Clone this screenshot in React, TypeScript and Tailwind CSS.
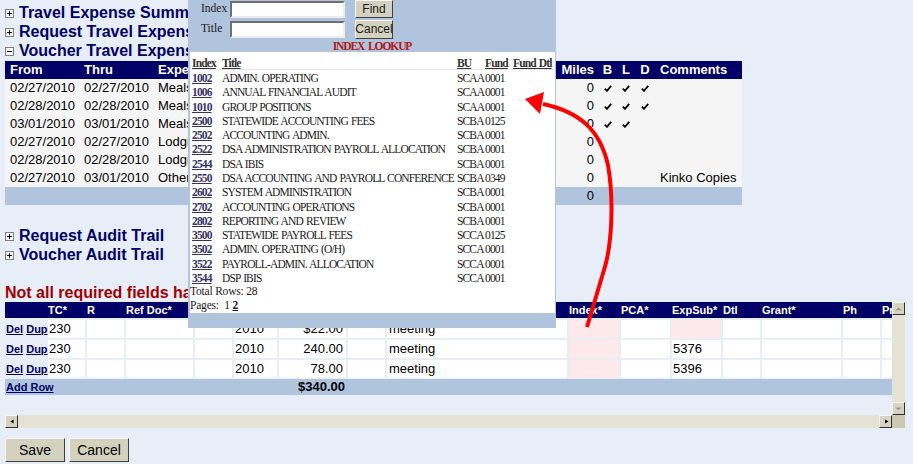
import React from "react";

type VRow = { from: string; thru: string; type: string; b?: boolean; l?: boolean; d?: boolean; note?: string };

const voucherRows: VRow[] = [
  { from: "02/27/2010", thru: "02/27/2010", type: "Meals", b: true, l: true, d: true },
  { from: "02/28/2010", thru: "02/28/2010", type: "Meals", b: true, l: true, d: true },
  { from: "03/01/2010", thru: "03/01/2010", type: "Meals", b: true, l: true },
  { from: "02/27/2010", thru: "02/27/2010", type: "Lodging" },
  { from: "02/28/2010", thru: "02/28/2010", type: "Lodging" },
  { from: "02/27/2010", thru: "03/01/2010", type: "Other", note: "Kinko Copies" },
];

const indexRows: [string, string, string, string][] = [
  ["1002", "ADMIN. OPERATING", "SCAA", "0001"],
  ["1006", "ANNUAL FINANCIAL AUDIT", "SCAA", "0001"],
  ["1010", "GROUP POSITIONS", "SCAA", "0001"],
  ["2500", "STATEWIDE ACCOUNTING FEES", "SCBA", "0125"],
  ["2502", "ACCOUNTING ADMIN.", "SCBA", "0001"],
  ["2522", "DSA ADMINISTRATION PAYROLL ALLOCATION", "SCBA", "0001"],
  ["2544", "DSA IBIS", "SCBA", "0001"],
  ["2550", "DSA ACCOUNTING AND PAYROLL CONFERENCE", "SCBA", "0349"],
  ["2602", "SYSTEM ADMINISTRATION", "SCBA", "0001"],
  ["2702", "ACCOUNTING OPERATIONS", "SCBA", "0001"],
  ["2802", "REPORTING AND REVIEW", "SCBA", "0001"],
  ["3500", "STATEWIDE PAYROLL FEES", "SCCA", "0125"],
  ["3502", "ADMIN. OPERATING (O/H)", "SCCA", "0001"],
  ["3522", "PAYROLL-ADMIN. ALLOCATION", "SCCA", "0001"],
  ["3544", "DSP IBIS", "SCCA", "0001"],
];

// widths of the grid columns in the lines table (2px spacing between)
const cols = [
  "w-[41px]", "w-[37px]", "w-[37px]", "w-[67px]", "w-[37px]", "w-[43px]", "w-[67px]", "w-[37px]",
  "w-[180px]", "w-[50px]", "w-[49px]", "w-[49px]", "w-[37px]", "w-[79px]", "w-[37px]", "w-[60px]",
];
const heads = ["", "TC*", "R", "Ref Doc*", "Line", "FY*", "Amount*", "Qty", "Description*", "Index*", "PCA*", "ExpSub*", "Dtl", "Grant*", "Ph", "Proj*"];

const lines = [
  { amt: "$22.00", exp: "" },
  { amt: "240.00", exp: "5376" },
  { amt: "78.00", exp: "5396" },
];

function Toggle({ label, open = false }: { label: string; open?: boolean }) {
  return (
    <div className="flex h-[19px] items-center whitespace-nowrap text-[16px] font-bold leading-[19px] text-[#000066]">
      <svg width="9" height="9" viewBox="0 0 9 9" className="mt-[2px] shrink-0">
        <rect x="0.5" y="0.5" width="8" height="8" fill="#fff" stroke="#808080" />
        <path d="M2 4.5h5" stroke="#000" />
        {!open && <path d="M4.5 2v5" stroke="#000" />}
      </svg>
      <span className="ml-[5px]">{label}</span>
    </div>
  );
}

function Check() {
  return (
    <svg width="8" height="7" viewBox="0 0 8 7" className="mx-auto mt-[6px]">
      <path d="M0.8 3.6 L3 5.8 L7.2 0.8" stroke="#000" strokeWidth="1.8" fill="none" />
    </svg>
  );
}

function SbButton({ dir, dim = false }: { dir: "up" | "down" | "left" | "right"; dim?: boolean }) {
  const pts = { up: "2,6 6.5,2 11,6", down: "2,2 6.5,6 11,2", left: "6,2 2,4.5 6,7", right: "3,2 7,4.5 3,7" }[dir];
  const vb = dir === "up" || dir === "down" ? "0 -2 13 11" : "-2 0 11 9";
  return (
    <div className="flex h-[13px] w-[13px] shrink-0 items-center justify-center border border-b-[#303030] border-l-[#f4f4ee] border-r-[#303030] border-t-[#f4f4ee] bg-[#d6d3c2]">
      <svg width="9" height="9" viewBox={vb}>
        <polygon points={pts} fill={dim ? "#9a988a" : "#000"} />
      </svg>
    </div>
  );
}

export default function App() {
  return (
    <div className="relative h-[464px] w-[913px] overflow-hidden bg-[#e7eef8] font-['Liberation_Sans',Arial,sans-serif] text-[13px] text-black">
      <div className="pl-[5px] pt-[3px]">
        <Toggle label="Travel Expense Summary" />
        <Toggle label="Request Travel Expenses" />
        <Toggle label="Voucher Travel Expenses" open />

        {/* voucher lines */}
        <div className="mt-[1px] w-[737px] leading-[18px]">
          <div className="flex h-[18px] bg-[#000066] font-bold text-white">
            <div className="w-[74px] pl-[5px]">From</div>
            <div className="w-[74px] pl-[5px]">Thru</div>
            <div className="w-[402px] pl-[5px]">Expense Type</div>
            <div className="w-[43px] pr-[4px] text-right">Miles</div>
            <div className="w-[19px] text-center">B</div>
            <div className="w-[18px] text-center">L</div>
            <div className="w-[20px] text-center">D</div>
            <div className="flex-1 pl-[5px]">Comments</div>
          </div>
          {voucherRows.map((r, i) => (
            <div key={i} className="flex h-[18px] bg-[#f5f5f5]">
              <div className="w-[74px] pl-[5px]">{r.from}</div>
              <div className="w-[74px] pl-[5px]">{r.thru}</div>
              <div className="w-[402px] pl-[5px]">{r.type}</div>
              <div className="w-[43px] pr-[4px] text-right">0</div>
              <div className="w-[19px]">{r.b && <Check />}</div>
              <div className="w-[18px]">{r.l && <Check />}</div>
              <div className="w-[20px]">{r.d && <Check />}</div>
              <div className="flex-1 whitespace-nowrap pl-[5px]">{r.note}</div>
            </div>
          ))}
          <div className="flex h-[18px] bg-[#b0c4de]">
            <div className="w-[550px]" />
            <div className="w-[43px] pr-[4px] text-right">0</div>
          </div>
        </div>

        <div className="mt-[21px]">
          <Toggle label="Request Audit Trail" />
          <Toggle label="Voucher Audit Trail" />
        </div>

        <div className="mt-[19px] h-[19px] whitespace-nowrap text-[16px] font-bold leading-[19px] text-[#a00000]">
          Not all required fields have been entered.
        </div>

        {/* accounting lines with scroll bars */}
        <div className="flex w-[900px] flex-col">
          <div className="flex h-[113px]">
            <div className="w-[887px] overflow-hidden">
              <div className="w-[960px]">
                <div className="flex h-[16px] gap-[2px] bg-[#000066] text-[11px] font-bold leading-[16px] text-white">
                  {heads.map((h, i) => (
                    <div key={i} className={`${cols[i]} shrink-0 whitespace-nowrap`}>{h}</div>
                  ))}
                </div>
                {lines.map((l, r) => (
                  <div key={r} className="mt-[2px] flex h-[18px] gap-[2px] leading-[18px]">
                    <div className={`${cols[0]} shrink-0 whitespace-nowrap pl-[1px] text-[11px] font-bold text-[#000066]`}>
                      <span className="underline">Del</span> <span className="underline">Dup</span>
                    </div>
                    <div className={`${cols[1]} shrink-0 bg-white pl-[1px]`}>230</div>
                    <div className={`${cols[2]} shrink-0 bg-white`} />
                    <div className={`${cols[3]} shrink-0 bg-white`} />
                    <div className={`${cols[4]} shrink-0 bg-white`} />
                    <div className={`${cols[5]} shrink-0 bg-white pl-[1px]`}>2010</div>
                    <div className={`${cols[6]} shrink-0 bg-white pr-[3px] text-right`}>{l.amt}</div>
                    <div className={`${cols[7]} shrink-0 bg-white`} />
                    <div className={`${cols[8]} shrink-0 bg-white pl-[2px]`}>meeting</div>
                    <div className={`${cols[9]} shrink-0 bg-[#fde9e9]`} />
                    <div className={`${cols[10]} shrink-0 bg-white`} />
                    <div className={`${cols[11]} shrink-0 pl-[1px] ${l.exp ? "bg-white" : "bg-[#fde9e9]"}`}>{l.exp}</div>
                    <div className={`${cols[12]} shrink-0 bg-white`} />
                    <div className={`${cols[13]} shrink-0 bg-white`} />
                    <div className={`${cols[14]} shrink-0 bg-white`} />
                    <div className={`${cols[15]} shrink-0 bg-white`} />
                  </div>
                ))}
                <div className="mt-[1px] flex h-[16px] gap-[2px] bg-[#b0c4de] leading-[16px]">
                  <div className="w-[280px] shrink-0 whitespace-nowrap pl-[1px] text-[11px] font-bold text-[#000066] underline">Add Row</div>
                  <div className="w-[61px] shrink-0 pr-[3px] text-right font-bold">$340.00</div>
                </div>
              </div>
            </div>
            <div className="flex w-[13px] flex-col bg-[#e4e2d4]">
              <SbButton dir="up" dim />
              <div className="flex-1" />
              <SbButton dir="down" dim />
            </div>
          </div>
          <div className="flex h-[13px]">
            <div className="flex w-[887px] bg-[#e4e2d4]">
              <SbButton dir="left" />
              <div className="flex-1" />
              <SbButton dir="right" />
            </div>
            <div className="w-[13px] bg-[#cbc7b2]" />
          </div>
        </div>

        <div className="mt-[10px] flex gap-[4px]">
          <button className="h-[24px] w-[60px] border border-b-[#404040] border-l-[#f6f5ef] border-r-[#404040] border-t-[#f6f5ef] bg-[#d5d1bf] text-[14px] leading-[20px]">Save</button>
          <button className="h-[24px] w-[60px] border border-b-[#404040] border-l-[#f6f5ef] border-r-[#404040] border-t-[#f6f5ef] bg-[#d5d1bf] text-[14px] leading-[20px]">Cancel</button>
        </div>
      </div>

      {/* index lookup popup */}
      <div className="absolute left-[188px] top-0 z-10 flex h-[328px] w-[368px] flex-col bg-[#b0c4de] font-['Liberation_Serif','Times_New_Roman',serif] text-[11.5px] text-[#1a1a1a]">
        <div className="h-[52px]">
          <div className="flex h-[18px] items-center">
            <div className="w-[42px] pl-[13px]">Index</div>
            <div className="h-[17px] w-[115px] border-2 border-b-[#ececec] border-l-[#6e6e6e] border-r-[#ececec] border-t-[#6e6e6e] bg-white" />
            <div className="ml-[10px] flex h-[18px] w-[38px] items-center justify-center border border-b-[#404040] border-l-[#f6f5ef] border-r-[#404040] border-t-[#f6f5ef] bg-[#d5d1bf] font-['Liberation_Sans',Arial,sans-serif] text-[12px]">Find</div>
          </div>
          <div className="mt-[2px] flex h-[18px] items-center">
            <div className="w-[42px] pl-[13px]">Title</div>
            <div className="h-[17px] w-[115px] border-2 border-b-[#ececec] border-l-[#6e6e6e] border-r-[#ececec] border-t-[#6e6e6e] bg-white" />
            <div className="ml-[10px] flex h-[19px] w-[38px] items-center justify-center border border-b-[#404040] border-l-[#f6f5ef] border-r-[#404040] border-t-[#f6f5ef] bg-[#d5d1bf] font-['Liberation_Sans',Arial,sans-serif] text-[12px]">Cancel</div>
          </div>
          <div className="mt-[1px] text-center text-[11.5px] font-bold leading-[14px] tracking-[-1.1px] text-[#b01818] [word-spacing:2px]">INDEX LOOKUP</div>
        </div>

        <div className="ml-[2px] mr-[1px] h-[261px] bg-white pl-[1px] tracking-[-0.85px]">
          <div className="mt-[4px] flex h-[14px] border-b border-[#e6e6e6] font-bold leading-[14px] text-[#333] underline [word-spacing:1px]">
            <div className="w-[31px] pl-[1px]">Index</div>
            <div className="w-[235px]">Title</div>
            <div className="w-[28px]">BU</div>
            <div className="w-[28px]">Fund</div>
            <div className="whitespace-nowrap">Fund Dtl</div>
          </div>
          <div className="mt-[1px]">
            {indexRows.map((r) => (
              <div key={r[0]} className="flex h-[14.28px] items-center whitespace-nowrap leading-[14px]">
                <div className="w-[31px] pl-[1px] font-bold text-[#333366] underline">{r[0]}</div>
                <div className="w-[235px] [word-spacing:1px]">{r[1]}</div>
                <div className="w-[28px]">{r[2]}</div>
                <div className="w-[28px]">{r[3]}</div>
              </div>
            ))}
          </div>
          <div className="-ml-[1px] h-[13px] leading-[13px] tracking-[-0.2px]">Total Rows: 28</div>
          <div className="-ml-[1px] h-[14px] leading-[14px] tracking-[-0.2px]">
            Pages:&nbsp; 1 <span className="font-bold underline">2</span>
          </div>
        </div>
        <div className="flex-1" />
      </div>

      {/* annotation arrow */}
      <svg className="pointer-events-none absolute left-0 top-0 z-20" width="913" height="464" viewBox="0 0 913 464">
        <path d="M587 327 L604 270 C612 245 614 200 608 165 C600 130 580 112 543 104" stroke="#ff0000" strokeWidth="4" fill="none" />
        <polygon points="525,99 544,92 540,114" fill="#ff0000" />
      </svg>
    </div>
  );
}
